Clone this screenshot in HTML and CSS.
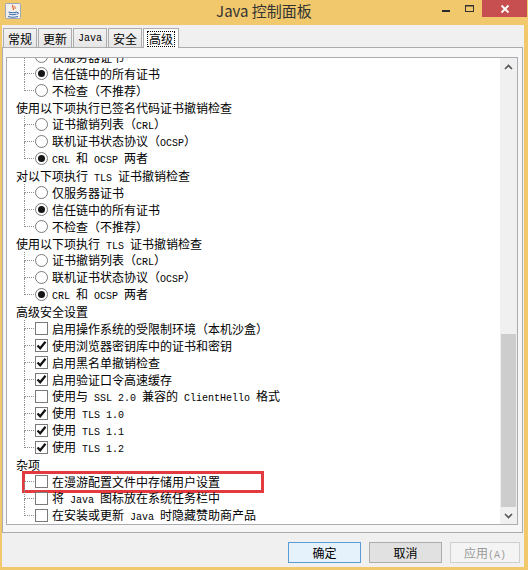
FILE: index.html
```html
<!DOCTYPE html>
<html>
  <head>
    <meta charset="utf-8">
    <title>Java 控制面板</title>
    <link rel="stylesheet" href="styles.css">
  </head>
  <body>
    <div class="titlebar">
      <div class="tb-left">
        <svg class="app-icon" width="16" height="16" viewBox="0 0 16 16">
          <rect x="0.5" y="0.5" width="15" height="15" rx="1" fill="#f4f1ec" stroke="#9aa6bb"/>
          <path d="M8 2 C6 4 10 5 8 7" fill="none" stroke="#e2642a" stroke-width="1.3"/>
          <path d="M10 3 C9 4 11 5 10 6" fill="none" stroke="#e2642a" stroke-width="1"/>
          <path d="M3.5 9 Q8 10.5 12 9 M4 11 Q8 12.5 11.5 11 M3 13.5 Q8 15 13 13.5" fill="none" stroke="#3b6fb4" stroke-width="1.1"/>
          <path d="M12 9.3 Q14.5 9.5 12.5 11.5" fill="none" stroke="#3b6fb4" stroke-width="1"/>
        </svg>
      </div>
      <div class="title">Java 控制面板</div>
      <div class="wctl">
        <span class="wbtn min"><svg width="10" height="10" viewBox="0 0 10 10"><rect x="1" y="6" width="8" height="2" fill="#2b2b2b"/></svg></span>
        <span class="wbtn max"><svg width="10" height="10" viewBox="0 0 10 10"><rect x="0.5" y="1.5" width="8" height="6" fill="none" stroke="#333"/><rect x="0.5" y="1.5" width="8" height="1" fill="#333"/></svg></span>
        <span class="wbtn close"><svg width="10" height="10" viewBox="0 0 10 10"><path d="M1.5 1.5 L8.5 8.5 M8.5 1.5 L1.5 8.5" stroke="#fff" stroke-width="1.8"/></svg></span>
      </div>
    </div>

    <div class="client">
      <div class="tabs">
        <div class="tab">常规</div>
        <div class="tab">更新</div>
        <div class="tab"><span class="en">Java</span></div>
        <div class="tab">安全</div>
        <div class="tab active"><span class="focus">高级</span></div>
      </div>

      <div class="panel">
        <div class="scrollpane">
          <div class="viewport">
            <div class="tree">
              <div class="group">
                <p class="gh">对以下项执行已签名代码证书撤销检查</p>
                <ul>
                  <li><span class="radio"></span><span class="lbl">仅服务器证书</span></li>
                  <li><span class="radio on"></span><span class="lbl">信任链中的所有证书</span></li>
                  <li><span class="radio"></span><span class="lbl">不检查（不推荐）</span></li>
                </ul>
              </div>
              <div class="group">
                <p class="gh">使用以下项执行已签名代码证书撤销检查</p>
                <ul>
                  <li><span class="radio"></span><span class="lbl">证书撤销列表（<span class="en">CRL</span>）</span></li>
                  <li><span class="radio"></span><span class="lbl">联机证书状态协议（<span class="en">OCSP</span>）</span></li>
                  <li><span class="radio on"></span><span class="lbl"><span class="en">CRL </span>和<span class="en"> OCSP </span>两者</span></li>
                </ul>
              </div>
              <div class="group">
                <p class="gh">对以下项执行<span class="en"> TLS </span>证书撤销检查</p>
                <ul>
                  <li><span class="radio"></span><span class="lbl">仅服务器证书</span></li>
                  <li><span class="radio on"></span><span class="lbl">信任链中的所有证书</span></li>
                  <li><span class="radio"></span><span class="lbl">不检查（不推荐）</span></li>
                </ul>
              </div>
              <div class="group">
                <p class="gh">使用以下项执行<span class="en"> TLS </span>证书撤销检查</p>
                <ul>
                  <li><span class="radio"></span><span class="lbl">证书撤销列表（<span class="en">CRL</span>）</span></li>
                  <li><span class="radio"></span><span class="lbl">联机证书状态协议（<span class="en">OCSP</span>）</span></li>
                  <li><span class="radio on"></span><span class="lbl"><span class="en">CRL </span>和<span class="en"> OCSP </span>两者</span></li>
                </ul>
              </div>
              <div class="group">
                <p class="gh">高级安全设置</p>
                <ul>
                  <li><span class="check"></span><span class="lbl">启用操作系统的受限制环境（本机沙盒）</span></li>
                  <li><span class="check on"><svg width="11" height="11" viewBox="0 0 11 11"><path d="M1.5 5.5 L4.2 8.3 L9.5 1.8" fill="none" stroke="#111" stroke-width="2.2"/></svg></span><span class="lbl">使用浏览器密钥库中的证书和密钥</span></li>
                  <li><span class="check on"><svg width="11" height="11" viewBox="0 0 11 11"><path d="M1.5 5.5 L4.2 8.3 L9.5 1.8" fill="none" stroke="#111" stroke-width="2.2"/></svg></span><span class="lbl">启用黑名单撤销检查</span></li>
                  <li><span class="check on"><svg width="11" height="11" viewBox="0 0 11 11"><path d="M1.5 5.5 L4.2 8.3 L9.5 1.8" fill="none" stroke="#111" stroke-width="2.2"/></svg></span><span class="lbl">启用验证口令高速缓存</span></li>
                  <li><span class="check"></span><span class="lbl">使用与<span class="en"> SSL 2.0 </span>兼容的<span class="en"> ClientHello </span>格式</span></li>
                  <li><span class="check on"><svg width="11" height="11" viewBox="0 0 11 11"><path d="M1.5 5.5 L4.2 8.3 L9.5 1.8" fill="none" stroke="#111" stroke-width="2.2"/></svg></span><span class="lbl">使用<span class="en"> TLS 1.0</span></span></li>
                  <li><span class="check on"><svg width="11" height="11" viewBox="0 0 11 11"><path d="M1.5 5.5 L4.2 8.3 L9.5 1.8" fill="none" stroke="#111" stroke-width="2.2"/></svg></span><span class="lbl">使用<span class="en"> TLS 1.1</span></span></li>
                  <li><span class="check on"><svg width="11" height="11" viewBox="0 0 11 11"><path d="M1.5 5.5 L4.2 8.3 L9.5 1.8" fill="none" stroke="#111" stroke-width="2.2"/></svg></span><span class="lbl">使用<span class="en"> TLS 1.2</span></span></li>
                </ul>
              </div>
              <div class="group">
                <p class="gh">杂项</p>
                <ul>
                  <li><span class="mark"></span><span class="check"></span><span class="lbl">在漫游配置文件中存储用户设置</span></li>
                  <li><span class="check"></span><span class="lbl">将<span class="en"> Java </span>图标放在系统任务栏中</span></li>
                  <li><span class="check"></span><span class="lbl">在安装或更新<span class="en"> Java </span>时隐藏赞助商产品</span></li>
                </ul>
              </div>
            </div>
          </div>
          <div class="vscroll">
            <div class="arrow"><svg width="9" height="6" viewBox="0 0 9 6"><path d="M1 5 L4.5 1.5 L8 5" fill="none" stroke="#555" stroke-width="1.6"/></svg></div>
            <div class="track"><div class="thumb"></div></div>
            <div class="arrow"><svg width="9" height="6" viewBox="0 0 9 6"><path d="M1 1 L4.5 4.5 L8 1" fill="none" stroke="#555" stroke-width="1.6"/></svg></div>
          </div>
        </div>
      </div>

      <div class="buttons">
        <button class="btn default">确定</button>
        <button class="btn">取消</button>
        <button class="btn disabled">应用<span class="en">(A)</span></button>
      </div>
    </div>
  </body>
</html>
```

FILE: styles.css
```css
body {
  margin: 0;
  width: 528px;
  height: 570px;
  background: #f1c86b;
  font-family: "Noto Sans CJK SC", sans-serif;
  font-size: 12px;
  color: #000;
  overflow: hidden;
}

.en {
  font-family: "Liberation Mono", monospace;
  font-size: 10px;
}

/* title bar */
.titlebar {
  height: 25px;
  display: grid;
  grid-template-columns: 1fr auto 1fr;
  align-items: start;
}
.tb-left { padding: 3px 0 0 5px; }
.app-icon { display: block; }
.title {
  font-size: 15px;
  line-height: 21px;
  color: #333;
  font-family: "Noto Sans CJK SC", "Open Sans", sans-serif;
}
.wctl {
  display: flex;
  justify-content: flex-end;
  padding-right: 1px;
}
.wbtn {
  display: flex;
  align-items: center;
  justify-content: center;
  height: 17px;
}
.wbtn.min { width: 24px; }
.wbtn.max { width: 24px; }
.wbtn.close {
  width: 45px;
  background: #c74f4f;
}

/* client area */
.client {
  margin: 0 4px 0 2px;
  height: 542px;
  background: #f0f0f0;
  padding-top: 3px;
  box-sizing: border-box;
}

.tabs {
  display: flex;
  align-items: flex-end;
  padding-left: 1px;
  height: 19px;
}
.tab {
  height: 19px;
  box-sizing: border-box;
  padding: 0 4px;
  border: 1px solid #acacac;
  border-bottom: none;
  margin-right: 1px;
  background: linear-gradient(#f2f2f2, #e6e6e6);
  line-height: 17px;
  display: flex;
  align-items: center;
}
.tab.active {
  height: 20px;
  margin-bottom: -1px;
  background: #fff;
  position: relative;
  z-index: 1;
}
.focus {
  outline: 1px dotted #000;
  line-height: 14px;
  padding: 0 1px;
}

.panel {
  border: 1px solid #acacac;
  background: #f7f7f7;
  margin-right: 1px;
  padding: 9px 4px 7px 3px;
}

.scrollpane {
  height: 468px;
  box-sizing: border-box;
  border: 1px solid #abadb3;
  background: #fff;
  display: flex;
}
.viewport {
  flex: 1;
  overflow: hidden;
}

.tree {
  margin-top: -27px;
  padding-left: 9px;
}
.gh {
  margin: 0;
  line-height: 17px;
  height: 17px;
  white-space: nowrap;
}
.group ul {
  list-style: none;
  margin: 0;
  padding: 0;
}
.group li {
  position: relative;
  height: 17px;
  line-height: 17px;
  padding-left: 19px;
  display: flex;
  align-items: center;
  white-space: nowrap;
}
.lbl {
  white-space: pre;
}
.group li::before {
  content: '';
  position: absolute;
  left: 8px;
  top: 0;
  width: 9px;
  height: 8px;
  border-left: 1px dotted #8f8f8f;
  border-bottom: 1px dotted #8f8f8f;
}
.group li:not(:last-child)::after {
  content: '';
  position: absolute;
  left: 8px;
  top: 9px;
  bottom: 0;
  border-left: 1px dotted #8f8f8f;
}

.radio, .check {
  width: 13px;
  height: 13px;
  box-sizing: border-box;
  border: 1px solid #7a7a7a;
  background: #fff;
  margin-right: 4px;
  flex: none;
  display: flex;
  align-items: center;
  justify-content: center;
}
.radio { border-radius: 50%; }
.radio.on::after {
  content: '';
  width: 7px;
  height: 7px;
  border-radius: 50%;
  background: #151515;
}
.check svg { display: block; }

.mark {
  position: absolute;
  left: 6px;
  top: -2px;
  width: 242px;
  height: 22px;
  box-sizing: border-box;
  border: 3px solid #e23a3e;
}

/* scrollbar */
.vscroll {
  width: 17px;
  background: #f0f0f0;
  display: flex;
  flex-direction: column;
}
.arrow {
  height: 17px;
  display: flex;
  align-items: center;
  justify-content: center;
}
.track {
  flex: 1;
  display: flex;
  flex-direction: column;
  justify-content: flex-end;
}
.thumb {
  height: 173px;
  margin: 0 1px;
  background: #cdcdcd;
}

/* buttons */
.buttons {
  display: flex;
  justify-content: flex-end;
  gap: 8px;
  padding: 9px 4px 0 0;
}
.btn {
  width: 73px;
  height: 21px;
  padding: 0;
  font-family: "Noto Sans CJK SC", sans-serif;
  font-size: 12px;
  line-height: 19px;
  background: #e1e1e1;
  border: 1px solid #adadad;
  color: #000;
}
.btn.default {
  background: #e5f1fb;
  border-color: #5b9bd5;
}
.btn.disabled {
  width: 70px;
  background: #f4f4f4;
  border-color: #cfcfcf;
  color: #9a9a9a;
}
```
